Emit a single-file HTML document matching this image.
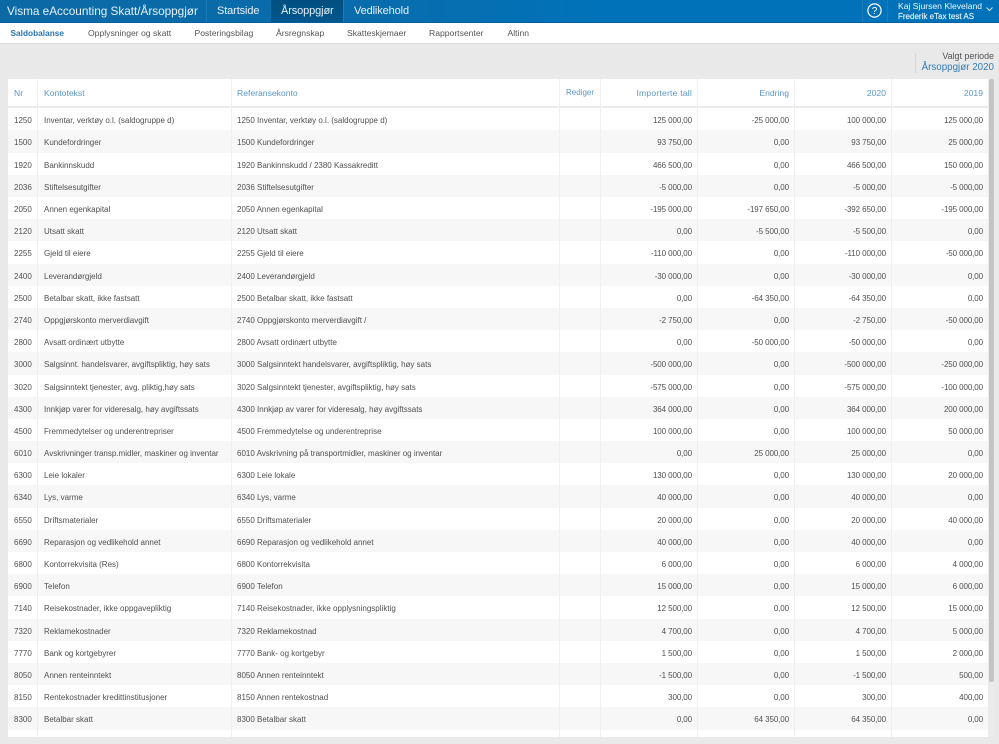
<!DOCTYPE html>
<html lang="no"><head><meta charset="utf-8"><title>Saldobalanse</title>
<style>
*{box-sizing:border-box}
html,body{margin:0;padding:0;width:999px;height:744px;overflow:hidden;background:#e9e9e9;font-family:"Liberation Sans",sans-serif}
#wrap{position:absolute;left:0;top:0;width:999px;height:744px;overflow:hidden;filter:blur(.3px)}
.a{position:absolute;white-space:nowrap}
#top{left:0;top:0;width:999px;height:23px;background:linear-gradient(90deg,#0b69a6 0,#0a6cab 340px,#0072b9 600px,#0072b9 100%);border-bottom:1px solid #005e99}
.t{color:#e6f1f8;font-size:11px;top:3px;line-height:17px;letter-spacing:-.12px}
.sep{top:0;width:1px;height:22px;background:#1f7cb6}
#act{left:271px;top:0;width:72px;height:22px;background:linear-gradient(#014f80,#01578d)}
#nav{left:0;top:23px;width:999px;height:21px;background:#fff;border-bottom:1px solid #dcdcdc}
.n{font-size:8.6px;top:27px;line-height:12px;color:#555}
#tb{left:8px;top:79px;width:980px;height:658px;background:#fff;overflow:hidden}
table,thead,tbody{display:block;width:980px}
table{font-size:8px;color:#505050}
tr{display:grid;grid-template-columns:30px 194px 328px 41px 97px 97px 97px 96px;height:22.2px}
thead tr{height:29.3px}
th{display:block;height:29.3px;line-height:28px;font-weight:normal;color:#5a96c8;font-size:8.6px;text-align:left;padding:0 6px;border-right:1px solid #efefef;border-bottom:2px solid #ebebeb}
td{display:block;line-height:25px;height:22.2px;padding:0 6px;border-right:1px solid #efefef;white-space:nowrap;overflow:hidden;letter-spacing:0}
tbody tr:nth-child(even) td{background:#f7f7f7}
td:nth-child(3),th:nth-child(3){padding-left:5px}
.r{text-align:right;padding-right:5px;letter-spacing:-.1px}
td:last-child,th:last-child{border-right:0}
</style></head><body><div id="wrap">
<div class="a" id="top"></div>
<div class="a" id="act"></div>
<div class="a sep" style="left:206px"></div>
<div class="a sep" style="left:343px"></div>
<div class="a sep" style="left:862px"></div>
<div class="a sep" style="left:887px"></div>
<div class="a t" style="left:7px;font-size:11.8px;letter-spacing:-.03px">Visma eAccounting Skatt/Årsoppgjør</div>
<div class="a t" style="left:217px">Startside</div>
<div class="a t" style="left:281px">Årsoppgjør</div>
<div class="a t" style="left:354px">Vedlikehold</div>
<svg class="a" style="left:866px;top:2px" width="18" height="18" viewBox="0 0 18 18"><circle cx="8.5" cy="8.5" r="6.6" fill="none" stroke="#fff" stroke-width="1.2"/><text x="8.5" y="12" text-anchor="middle" font-size="10" font-family="Liberation Sans" fill="#fff">?</text></svg>
<div class="a" style="left:898px;top:0;font-size:8.6px;line-height:12px;color:#f2f8fc">Kaj Sjursen Kleveland</div>
<div class="a" style="left:898px;top:11px;font-size:8px;line-height:12px;color:#e6f1f8;-webkit-text-stroke:.15px #e6f1f8">Frederik eTax test AS</div>
<svg class="a" style="left:985px;top:6px" width="9" height="6" viewBox="0 0 9 6"><path d="M1.5 1.5L4.5 4.5L7.5 1.5" fill="none" stroke="#cfe3f1" stroke-width="1"/></svg>
<div class="a" id="nav"></div>
<div class="a n" style="left:10.5px;color:#2a75b3;font-weight:bold;font-size:8.3px">Saldobalanse</div>
<div class="a n" style="left:88px">Opplysninger og skatt</div>
<div class="a n" style="left:194.5px">Posteringsbilag</div>
<div class="a n" style="left:276px">Årsregnskap</div>
<div class="a n" style="left:347px">Skatteskjemaer</div>
<div class="a n" style="left:429px">Rapportsenter</div>
<div class="a n" style="left:507.5px">Altinn</div>
<div class="a" style="left:915px;top:53px;width:1px;height:20px;background:#d8d8d8"></div>
<div class="a" style="right:5px;top:50px;font-size:8.9px;line-height:13px;color:#555">Valgt periode</div>
<div class="a" style="right:5px;top:60.5px;font-size:9.8px;line-height:14px;color:#2f7db8">Årsoppgjør 2020</div>
<div class="a" id="tb"><table>
<thead><tr><th>Nr</th><th>Kontotekst</th><th>Referansekonto</th><th style="padding:0 0 0 6px;font-size:8px">Rediger</th><th class="r" style="letter-spacing:.2px">Importerte tall</th><th class="r" style="letter-spacing:0">Endring</th><th class="r" style="letter-spacing:0">2020</th><th class="r" style="letter-spacing:0">2019</th></tr></thead>
<tbody>
<tr><td>1250</td><td>Inventar, verktøy o.l. (saldogruppe d)</td><td>1250 Inventar, verktøy o.l. (saldogruppe d)</td><td></td><td class="r">125 000,00</td><td class="r">-25 000,00</td><td class="r">100 000,00</td><td class="r">125 000,00</td></tr>
<tr><td>1500</td><td>Kundefordringer</td><td>1500 Kundefordringer</td><td></td><td class="r">93 750,00</td><td class="r">0,00</td><td class="r">93 750,00</td><td class="r">25 000,00</td></tr>
<tr><td>1920</td><td>Bankinnskudd</td><td>1920 Bankinnskudd / 2380 Kassakreditt</td><td></td><td class="r">466 500,00</td><td class="r">0,00</td><td class="r">466 500,00</td><td class="r">150 000,00</td></tr>
<tr><td>2036</td><td>Stiftelsesutgifter</td><td>2036 Stiftelsesutgifter</td><td></td><td class="r">-5 000,00</td><td class="r">0,00</td><td class="r">-5 000,00</td><td class="r">-5 000,00</td></tr>
<tr><td>2050</td><td>Annen egenkapital</td><td>2050 Annen egenkapital</td><td></td><td class="r">-195 000,00</td><td class="r">-197 650,00</td><td class="r">-392 650,00</td><td class="r">-195 000,00</td></tr>
<tr><td>2120</td><td>Utsatt skatt</td><td>2120 Utsatt skatt</td><td></td><td class="r">0,00</td><td class="r">-5 500,00</td><td class="r">-5 500,00</td><td class="r">0,00</td></tr>
<tr><td>2255</td><td>Gjeld til eiere</td><td>2255 Gjeld til eiere</td><td></td><td class="r">-110 000,00</td><td class="r">0,00</td><td class="r">-110 000,00</td><td class="r">-50 000,00</td></tr>
<tr><td>2400</td><td>Leverandørgjeld</td><td>2400 Leverandørgjeld</td><td></td><td class="r">-30 000,00</td><td class="r">0,00</td><td class="r">-30 000,00</td><td class="r">0,00</td></tr>
<tr><td>2500</td><td>Betalbar skatt, ikke fastsatt</td><td>2500 Betalbar skatt, ikke fastsatt</td><td></td><td class="r">0,00</td><td class="r">-64 350,00</td><td class="r">-64 350,00</td><td class="r">0,00</td></tr>
<tr><td>2740</td><td>Oppgjørskonto merverdiavgift</td><td>2740 Oppgjørskonto merverdiavgift /</td><td></td><td class="r">-2 750,00</td><td class="r">0,00</td><td class="r">-2 750,00</td><td class="r">-50 000,00</td></tr>
<tr><td>2800</td><td>Avsatt ordinært utbytte</td><td>2800 Avsatt ordinært utbytte</td><td></td><td class="r">0,00</td><td class="r">-50 000,00</td><td class="r">-50 000,00</td><td class="r">0,00</td></tr>
<tr><td>3000</td><td>Salgsinnt. handelsvarer, avgiftspliktig, høy sats</td><td>3000 Salgsinntekt handelsvarer, avgiftspliktig, høy sats</td><td></td><td class="r">-500 000,00</td><td class="r">0,00</td><td class="r">-500 000,00</td><td class="r">-250 000,00</td></tr>
<tr><td>3020</td><td>Salgsinntekt tjenester, avg. pliktig,høy sats</td><td>3020 Salgsinntekt tjenester, avgiftspliktig, høy sats</td><td></td><td class="r">-575 000,00</td><td class="r">0,00</td><td class="r">-575 000,00</td><td class="r">-100 000,00</td></tr>
<tr><td>4300</td><td>Innkjøp varer for videresalg, høy avgiftssats</td><td>4300 Innkjøp av varer for videresalg, høy avgiftssats</td><td></td><td class="r">364 000,00</td><td class="r">0,00</td><td class="r">364 000,00</td><td class="r">200 000,00</td></tr>
<tr><td>4500</td><td>Fremmedytelser og underentrepriser</td><td>4500 Fremmedytelse og underentreprise</td><td></td><td class="r">100 000,00</td><td class="r">0,00</td><td class="r">100 000,00</td><td class="r">50 000,00</td></tr>
<tr><td>6010</td><td>Avskrivninger transp.midler, maskiner og inventar</td><td>6010 Avskrivning på transportmidler, maskiner og inventar</td><td></td><td class="r">0,00</td><td class="r">25 000,00</td><td class="r">25 000,00</td><td class="r">0,00</td></tr>
<tr><td>6300</td><td>Leie lokaler</td><td>6300 Leie lokale</td><td></td><td class="r">130 000,00</td><td class="r">0,00</td><td class="r">130 000,00</td><td class="r">20 000,00</td></tr>
<tr><td>6340</td><td>Lys, varme</td><td>6340 Lys, varme</td><td></td><td class="r">40 000,00</td><td class="r">0,00</td><td class="r">40 000,00</td><td class="r">0,00</td></tr>
<tr><td>6550</td><td>Driftsmaterialer</td><td>6550 Driftsmaterialer</td><td></td><td class="r">20 000,00</td><td class="r">0,00</td><td class="r">20 000,00</td><td class="r">40 000,00</td></tr>
<tr><td>6690</td><td>Reparasjon og vedlikehold annet</td><td>6690 Reparasjon og vedlikehold annet</td><td></td><td class="r">40 000,00</td><td class="r">0,00</td><td class="r">40 000,00</td><td class="r">0,00</td></tr>
<tr><td>6800</td><td>Kontorrekvisita (Res)</td><td>6800 Kontorrekvisita</td><td></td><td class="r">6 000,00</td><td class="r">0,00</td><td class="r">6 000,00</td><td class="r">4 000,00</td></tr>
<tr><td>6900</td><td>Telefon</td><td>6900 Telefon</td><td></td><td class="r">15 000,00</td><td class="r">0,00</td><td class="r">15 000,00</td><td class="r">6 000,00</td></tr>
<tr><td>7140</td><td>Reisekostnader, ikke oppgavepliktig</td><td>7140 Reisekostnader, ikke opplysningspliktig</td><td></td><td class="r">12 500,00</td><td class="r">0,00</td><td class="r">12 500,00</td><td class="r">15 000,00</td></tr>
<tr><td>7320</td><td>Reklamekostnader</td><td>7320 Reklamekostnad</td><td></td><td class="r">4 700,00</td><td class="r">0,00</td><td class="r">4 700,00</td><td class="r">5 000,00</td></tr>
<tr><td>7770</td><td>Bank og kortgebyrer</td><td>7770 Bank- og kortgebyr</td><td></td><td class="r">1 500,00</td><td class="r">0,00</td><td class="r">1 500,00</td><td class="r">2 000,00</td></tr>
<tr><td>8050</td><td>Annen renteinntekt</td><td>8050 Annen renteinntekt</td><td></td><td class="r">-1 500,00</td><td class="r">0,00</td><td class="r">-1 500,00</td><td class="r">500,00</td></tr>
<tr><td>8150</td><td>Rentekostnader kredittinstitusjoner</td><td>8150 Annen rentekostnad</td><td></td><td class="r">300,00</td><td class="r">0,00</td><td class="r">300,00</td><td class="r">400,00</td></tr>
<tr><td>8300</td><td>Betalbar skatt</td><td>8300 Betalbar skatt</td><td></td><td class="r">0,00</td><td class="r">64 350,00</td><td class="r">64 350,00</td><td class="r">0,00</td></tr>
<tr><td></td><td></td><td></td><td></td><td></td><td></td><td></td><td></td></tr>
</tbody></table></div>
<div class="a" style="left:988px;top:79px;width:7px;height:658px;background:#ebebeb"></div>
<div class="a" style="left:989px;top:79px;width:5px;height:603px;background:#c4c4c4;border-radius:2px"></div>
</div></body></html>
